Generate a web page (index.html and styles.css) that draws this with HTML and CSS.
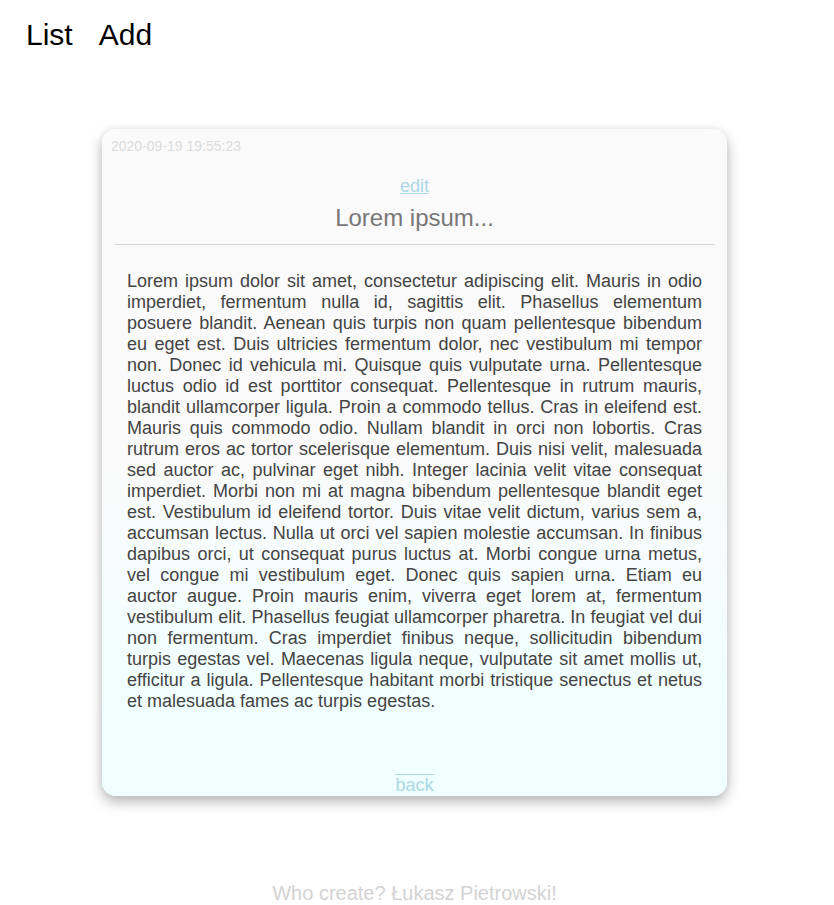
FILE: index.html
```html
<!DOCTYPE html>
<html lang="en">
<head>
<meta charset="utf-8">
<title>Lorem ipsum...</title>
<link rel="stylesheet" href="styles.css">
</head>
<body>
<nav class="nav">
  <a class="nav-link" href="#">List</a>
  <a class="nav-link" href="#">Add</a>
</nav>
<main class="main">
  <article class="card">
    <div class="date">2020-09-19 19:55:23</div>
    <div class="edit-row"><a class="edit" href="#">edit</a></div>
    <h1 class="title">Lorem ipsum...</h1>
    <hr class="rule">
    <p class="text">Lorem ipsum dolor sit amet, consectetur adipiscing elit. Mauris in odio imperdiet, fermentum nulla id, sagittis elit. Phasellus elementum posuere blandit. Aenean quis turpis non quam pellentesque bibendum eu eget est. Duis ultricies fermentum dolor, nec vestibulum mi tempor non. Donec id vehicula mi. Quisque quis vulputate urna. Pellentesque luctus odio id est porttitor consequat. Pellentesque in rutrum mauris, blandit ullamcorper ligula. Proin a commodo tellus. Cras in eleifend est. Mauris quis commodo odio. Nullam blandit in orci non lobortis. Cras rutrum eros ac tortor scelerisque elementum. Duis nisi velit, malesuada sed auctor ac, pulvinar eget nibh. Integer lacinia velit vitae consequat imperdiet. Morbi non mi at magna bibendum pellentesque blandit eget est. Vestibulum id eleifend tortor. Duis vitae velit dictum, varius sem a, accumsan lectus. Nulla ut orci vel sapien molestie accumsan. In finibus dapibus orci, ut consequat purus luctus at. Morbi congue urna metus, vel congue mi vestibulum eget. Donec quis sapien urna. Etiam eu auctor augue. Proin mauris enim, viverra eget lorem at, fermentum vestibulum elit. Phasellus feugiat ullamcorper pharetra. In feugiat vel dui non fermentum. Cras imperdiet finibus neque, sollicitudin bibendum turpis egestas vel. Maecenas ligula neque, vulputate sit amet mollis ut, efficitur a ligula. Pellentesque habitant morbi tristique senectus et netus et malesuada fames ac turpis egestas.</p>
    <div class="back-row"><a class="back" href="#">back</a></div>
  </article>
</main>
<footer class="footer">Who create? Łukasz Pietrowski!</footer>
</body>
</html>
```
FILE: styles.css
```css
html, body {
  background: #ffffff;
}
body {
  margin: 8px 13px 8px 8px;
  font-family: "Liberation Sans", Arial, sans-serif;
}
.nav {
  display: flex;
  gap: 26px;
  padding: 10px 0 0 18px;
}
.nav-link {
  font-size: 30px;
  line-height: 34px;
  color: #000;
  text-decoration: none;
}
.main {
  display: flex;
  justify-content: center;
  margin-top: 77px;
}
.card {
  width: 625px;
  border-radius: 14px;
  background: linear-gradient(to bottom, #fafafa 0%, #fafafa 50%, #f0ffff 88%, #f0ffff 100%);
  box-shadow: 0 6px 14px rgba(0, 0, 0, 0.28), 0 0 6px rgba(0, 0, 0, 0.06);
  padding-bottom: 1.5px;
}
.date {
  padding: 9px 0 0 9px;
  font-size: 14px;
  line-height: 16px;
  color: #dcdcdc;
}
.edit-row {
  margin-top: 21.5px;
  text-align: center;
  line-height: 21px;
}
.edit {
  font-size: 18px;
  color: #add8e6;
  text-decoration: underline;
}
.title {
  margin: 7.5px 0 0;
  text-align: center;
  font-size: 24px;
  line-height: 28px;
  font-weight: normal;
  color: #777777;
}
.rule {
  margin: 12px 12px 0 13px;
  border: 0;
  border-top: 1px solid #d3d3d3;
  height: 0;
}
.text {
  margin: 25.5px 0 0;
  padding: 0 25px;
  font-size: 18px;
  line-height: 21px;
  text-align: justify;
  color: #444444;
}
.back-row {
  margin-top: 62px;
  text-align: center;
}
.back {
  display: inline-block;
  font-size: 18px;
  line-height: 20px;
  color: #add8e6;
  text-decoration: none;
  border-top: 1px solid #add8e6;
}
.footer {
  margin-top: 85.5px;
  text-align: center;
  font-size: 20px;
  line-height: 23px;
  color: #d3d3d3;
}
```
